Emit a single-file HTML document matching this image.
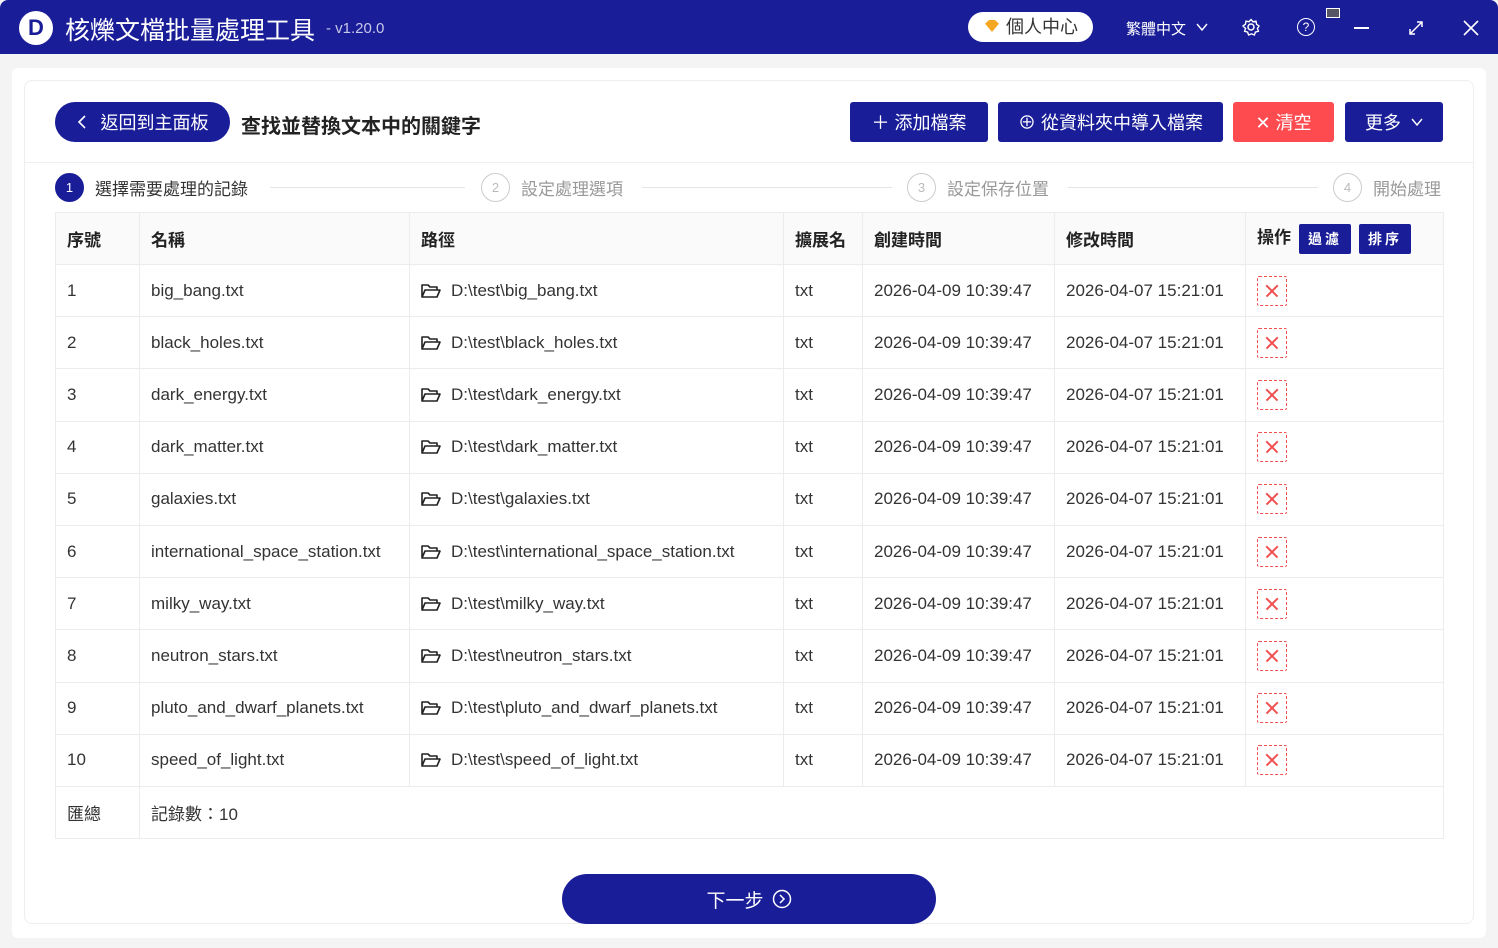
<!DOCTYPE html>
<html><head><meta charset="utf-8"><style>
*{box-sizing:border-box;margin:0;padding:0}
body{width:1498px;height:948px;background:#f4f4f4;font-family:"Liberation Sans","Noto Sans CJK TC",sans-serif;position:relative;overflow:hidden;color:#333}
.top{position:absolute;left:0;top:0;width:1498px;height:54px;background:#1a1d98;border-radius:8px 8px 0 0;color:#fff}
.abs{position:absolute}
.panel{position:absolute;left:12px;top:68px;width:1474px;height:870px;background:#fff;border-radius:6px}
.card{position:absolute;left:24px;top:80px;width:1450px;height:844px;border:1px solid #eee;border-radius:8px;background:#fff}
.btn{position:absolute;background:#1a1d98;color:#fff;font-size:18px;display:flex;align-items:center;justify-content:center;border-radius:3px;height:40px;top:102px}
.step{position:absolute;top:173px;font-size:17px;color:#999;display:flex;align-items:center}
.circ{width:29px;height:29px;border-radius:50%;border:1px solid #ccc;color:#bbb;font-size:13px;display:flex;align-items:center;justify-content:center;margin-right:11px}
.line{position:absolute;top:187px;height:1px;background:#e5e5e5}
table{position:absolute;left:55px;top:212px;border-collapse:collapse;font-size:17px;color:#333}
td{border:1px solid #ececec;padding-left:11px;height:52.2px}
tr.h td{font-weight:bold;color:#222;background:#fafafa;height:52px}
.x{display:inline-block;width:30px;height:30px;border:1.5px dashed #f05050;border-radius:2px;position:relative;vertical-align:middle}
.x:before,.x:after{content:"";position:absolute;left:6px;top:13px;width:16px;height:1.6px;background:#f05050;transform:rotate(45deg)}
.x:after{transform:rotate(-45deg)}
.sb{display:inline-block;background:#1a1d98;color:#fff;font-size:14px;padding:0 9px;height:30px;line-height:30px;border-radius:2px;margin-left:8px;font-weight:bold;letter-spacing:3px;vertical-align:middle}
.fd{vertical-align:-3px;margin-right:10px}
</style></head><body>
<div class="top">
 <div class="abs" style="left:19px;top:11px;width:34px;height:34px;border-radius:50%;background:#fff;color:#1a1d98;font-weight:bold;font-size:22px;text-align:center;line-height:34px">D</div>
 <div class="abs" style="left:65px;top:11px;font-size:25px">核爍文檔批量處理工具</div>
 <div class="abs" style="left:326px;top:20px;font-size:15px;color:#c8c8e8">- v1.20.0</div>
 <div class="abs" style="left:968px;top:12px;width:125px;height:30px;border-radius:15px;background:#fff;color:#333;font-size:18px;line-height:30px;padding-left:38px">個人中心</div>
 <div class="abs" style="left:985px;top:20px;width:14px;height:12px;background:#f5a623;clip-path:polygon(0 30%,30% 0,70% 0,100% 30%,50% 100%)"></div>
 <div class="abs" style="left:1126px;top:18px;font-size:15px">繁體中文</div>
 <svg class="abs" style="left:1196px;top:22px" width="12" height="10"><path d="M1 2l5 6 5-6" stroke="#fff" stroke-width="1.4" fill="none"/></svg>
 <svg class="abs" style="left:1242px;top:18px" width="18" height="18" viewBox="0 0 18 18"><circle cx="9" cy="9" r="3" stroke="#fff" stroke-width="1.5" fill="none"/><path d="M9 1.5l2 2.2 3-.5.6 3 2.4 1.8-1.6 2.5 1 2.8-3 .8-1 2.9-2.9-1.1-2.9 1.1-1-2.9-3-.8 1-2.8L1 8l2.4-1.8.6-3 3 .5z" stroke="#fff" stroke-width="1.4" fill="none"/></svg>
 <div class="abs" style="left:1297px;top:18px;width:18px;height:18px;border:1.5px solid #fff;border-radius:50%;font-size:12px;text-align:center;line-height:16px">?</div>
 <div class="abs" style="left:1326px;top:8px;width:14px;height:10px;border:1px solid #fff;background:#556"></div>
 <div class="abs" style="left:1354px;top:27px;width:15px;height:1.5px;background:#fff"></div>
 <svg class="abs" style="left:1408px;top:20px" width="16" height="16"><path d="M2 14L14 2M9 2h5v5M2 9v5h5" stroke="#fff" stroke-width="1.5" fill="none"/></svg>
 <svg class="abs" style="left:1463px;top:20px" width="16" height="16"><path d="M1 1l14 14M15 1L1 15" stroke="#fff" stroke-width="1.6"/></svg>
</div>
<div class="panel"></div>
<div class="card"></div>
<div class="abs" style="left:25px;top:162px;width:1448px;height:1px;background:#eee"></div>
<div class="btn" style="left:55px;width:175px;border-radius:20px;font-size:18px"><svg width="10" height="16" style="margin-right:14px"><path d="M8 2L2 8l6 6" stroke="#fff" stroke-width="1.6" fill="none"/></svg>返回到主面板</div>
<div class="abs" style="left:241px;top:110px;font-size:20px;font-weight:bold;color:#222">查找並替換文本中的關鍵字</div>
<div class="btn" style="left:850px;width:138px">＋ 添加檔案</div>
<div class="btn" style="left:998px;width:225px">⊕ 從資料夾中導入檔案</div>
<div class="btn" style="left:1233px;width:101px;background:#fd4b50">✕ 清空</div>
<div class="btn" style="left:1345px;width:98px">更多<svg width="12" height="10" style="margin-left:10px"><path d="M1 2l5 6 5-6" stroke="#fff" stroke-width="1.4" fill="none"/></svg></div>
<div class="step" style="left:55px;color:#333"><div class="circ" style="background:#1a1d98;border-color:#1a1d98;color:#fff">1</div>選擇需要處理的記錄</div>
<div class="line" style="left:270px;width:195px"></div>
<div class="step" style="left:481px"><div class="circ">2</div>設定處理選項</div>
<div class="line" style="left:642px;width:250px"></div>
<div class="step" style="left:907px"><div class="circ">3</div>設定保存位置</div>
<div class="line" style="left:1068px;width:250px"></div>
<div class="step" style="left:1333px"><div class="circ">4</div>開始處理</div>
<svg width="0" height="0" style="position:absolute"><defs><symbol id="f" viewBox="0 0 20 16"><path d="M1 14V2h6l2 2h7v3M1 14l3-7h15l-3 7z" stroke="#222" stroke-width="1.6" fill="none" stroke-linejoin="round"/></symbol></defs></svg>
<table>
<colgroup><col style="width:84px"><col style="width:270px"><col style="width:374px"><col style="width:79px"><col style="width:192px"><col style="width:191px"><col style="width:198px"></colgroup>
<tr class="h"><td>序號</td><td>名稱</td><td>路徑</td><td>擴展名</td><td>創建時間</td><td>修改時間</td><td>操作<span class="sb">過濾</span><span class="sb">排序</span></td></tr>
<tr><td>1</td><td>big_bang.txt</td><td><svg class="fd" width="20" height="16"><use href="#f"/></svg>D:\test\big_bang.txt</td><td>txt</td><td>2026-04-09 10:39:47</td><td>2026-04-07 15:21:01</td><td><span class="x"></span></td></tr>
<tr><td>2</td><td>black_holes.txt</td><td><svg class="fd" width="20" height="16"><use href="#f"/></svg>D:\test\black_holes.txt</td><td>txt</td><td>2026-04-09 10:39:47</td><td>2026-04-07 15:21:01</td><td><span class="x"></span></td></tr>
<tr><td>3</td><td>dark_energy.txt</td><td><svg class="fd" width="20" height="16"><use href="#f"/></svg>D:\test\dark_energy.txt</td><td>txt</td><td>2026-04-09 10:39:47</td><td>2026-04-07 15:21:01</td><td><span class="x"></span></td></tr>
<tr><td>4</td><td>dark_matter.txt</td><td><svg class="fd" width="20" height="16"><use href="#f"/></svg>D:\test\dark_matter.txt</td><td>txt</td><td>2026-04-09 10:39:47</td><td>2026-04-07 15:21:01</td><td><span class="x"></span></td></tr>
<tr><td>5</td><td>galaxies.txt</td><td><svg class="fd" width="20" height="16"><use href="#f"/></svg>D:\test\galaxies.txt</td><td>txt</td><td>2026-04-09 10:39:47</td><td>2026-04-07 15:21:01</td><td><span class="x"></span></td></tr>
<tr><td>6</td><td>international_space_station.txt</td><td><svg class="fd" width="20" height="16"><use href="#f"/></svg>D:\test\international_space_station.txt</td><td>txt</td><td>2026-04-09 10:39:47</td><td>2026-04-07 15:21:01</td><td><span class="x"></span></td></tr>
<tr><td>7</td><td>milky_way.txt</td><td><svg class="fd" width="20" height="16"><use href="#f"/></svg>D:\test\milky_way.txt</td><td>txt</td><td>2026-04-09 10:39:47</td><td>2026-04-07 15:21:01</td><td><span class="x"></span></td></tr>
<tr><td>8</td><td>neutron_stars.txt</td><td><svg class="fd" width="20" height="16"><use href="#f"/></svg>D:\test\neutron_stars.txt</td><td>txt</td><td>2026-04-09 10:39:47</td><td>2026-04-07 15:21:01</td><td><span class="x"></span></td></tr>
<tr><td>9</td><td>pluto_and_dwarf_planets.txt</td><td><svg class="fd" width="20" height="16"><use href="#f"/></svg>D:\test\pluto_and_dwarf_planets.txt</td><td>txt</td><td>2026-04-09 10:39:47</td><td>2026-04-07 15:21:01</td><td><span class="x"></span></td></tr>
<tr><td>10</td><td>speed_of_light.txt</td><td><svg class="fd" width="20" height="16"><use href="#f"/></svg>D:\test\speed_of_light.txt</td><td>txt</td><td>2026-04-09 10:39:47</td><td>2026-04-07 15:21:01</td><td><span class="x"></span></td></tr>
<tr><td style="height:47px">匯總</td><td colspan="6" style="border-right:1px solid #ececec">記錄數：10</td></tr>
</table>
<div class="abs" style="left:562px;top:874px;width:374px;height:50px;border-radius:25px;background:#1a1d98;color:#fff;font-size:19px;display:flex;align-items:center;justify-content:center">下一步<svg width="20" height="20" style="margin-left:8px"><circle cx="10" cy="10" r="8.5" stroke="#fff" stroke-width="1.5" fill="none"/><path d="M8 6l4 4-4 4" stroke="#fff" stroke-width="1.5" fill="none"/></svg></div>
</body></html>
